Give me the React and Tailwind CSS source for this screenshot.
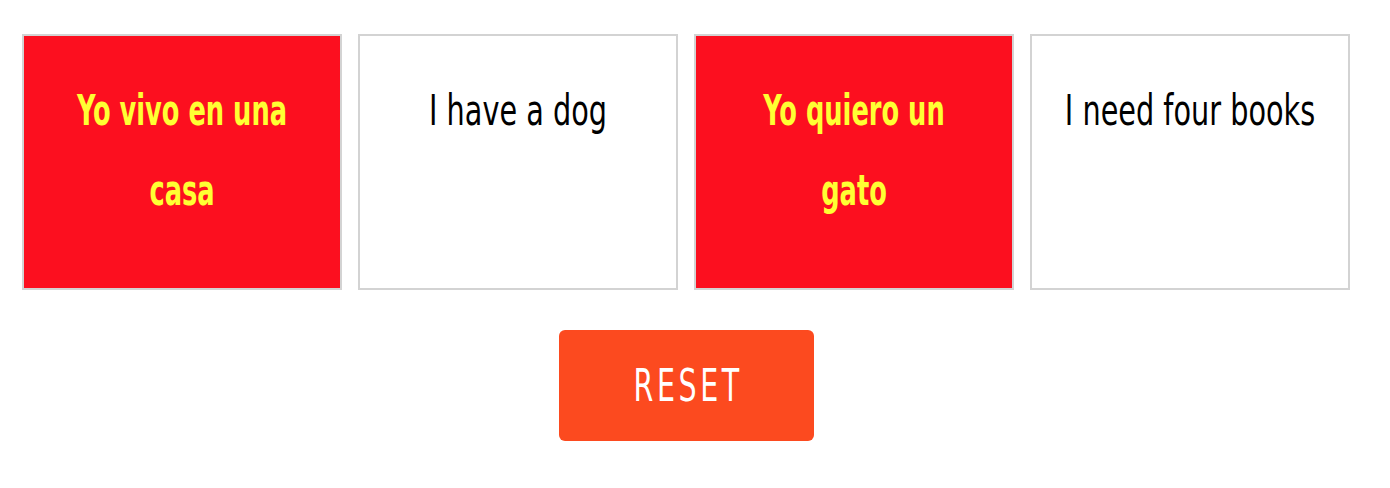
import React from 'react';

const cards = [
  { text: 'Yo vivo en una casa', active: true },
  { text: 'I have a dog', active: false },
  { text: 'Yo quiero un gato', active: true },
  { text: 'I need four books', active: false },
];

// Oswald isn't available, so a condensed face is squeezed a little further
const Card = ({ card }) => {
  return (
    <div
      className={`w-[320px] h-[256px] border-2 border-[#d3d3d3] pt-[35px] flex justify-center ${
        card.active ? 'bg-[#fc0f1f] text-[#ffff33]' : 'bg-white text-black'
      }`}
    >
      <div
        className={`shrink-0 w-[350px] text-center text-[42px] leading-[80px] origin-top ${
          card.active ? 'font-bold scale-x-[0.68]' : 'scale-x-[0.76]'
        }`}
      >
        {card.text}
      </div>
    </div>
  );
};

export default function App() {
  return (
    <div className="w-[1390px] h-[488px] bg-white pt-[34px] pl-[22px] font-['DejaVu_Sans',sans-serif] font-stretch-condensed">
      <div className="flex gap-4">
        {cards.map((card, i) => (
          <Card key={i} card={card} />
        ))}
      </div>
      <div className="w-[1328px] flex justify-center mt-[40px]">
        <button className="w-[255px] h-[111px] rounded-md bg-[#fc4a1f] text-white flex items-center justify-center">
          <span className="inline-block text-[44px] leading-none tracking-[5px] pl-[5px] scale-x-[0.72]">RESET</span>
        </button>
      </div>
    </div>
  );
}
